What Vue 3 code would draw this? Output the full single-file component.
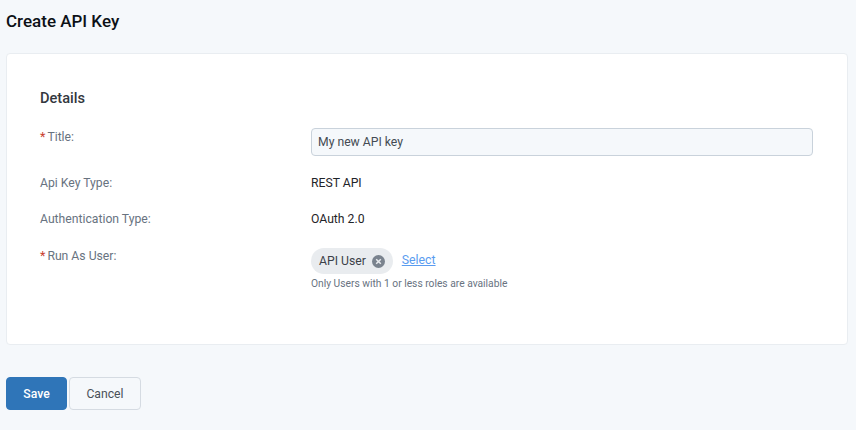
<script setup>
const rows = [
  { label: 'Api Key Type:', value: 'REST API' },
  { label: 'Authentication Type:', value: 'OAuth 2.0' },
]
</script>

<template>
  <main class="page">
    <h1 class="title">Create API Key</h1>
    <section class="card">
      <h2 class="section">Details</h2>
      <div class="row row-title">
        <div class="label label-title"><span class="req">*</span>Title:</div>
        <input class="input" value="My new API key" />
      </div>
      <div v-for="r in rows" :key="r.label" class="row row-static">
        <div class="label">{{ r.label }}</div>
        <div class="value">{{ r.value }}</div>
      </div>
      <div class="row row-user">
        <div class="label"><span class="req">*</span>Run As User:</div>
        <div>
          <div class="picker">
            <span class="chip">API User
              <svg class="x" width="13" height="13" viewBox="0 0 13 13">
                <circle cx="6.5" cy="6.5" r="6.5" fill="#7a838e" />
                <path d="M4.2 4.2l4.6 4.6M8.8 4.2l-4.6 4.6" stroke="#e9ecef" stroke-width="1.5" fill="none" />
              </svg>
            </span>
            <a class="link" href="#">Select</a>
          </div>
          <div class="hint">Only Users with 1 or less roles are available</div>
        </div>
      </div>
    </section>
    <div class="actions">
      <button class="btn primary">Save</button>
      <button class="btn ghost">Cancel</button>
    </div>
  </main>
</template>

<style>
html, body { margin: 0; background: #f5f8fb; }
</style>

<style scoped>
.page {
  width: 856px;
  height: 430px;
  box-sizing: border-box;
  background: #f5f8fb;
  padding: 11px 8px 0 6px;
  font-family: Roboto, "Liberation Sans", sans-serif;
  overflow: hidden;
}
.title {
  margin: 0;
  font-size: 17px;
  line-height: 21px;
  font-weight: 500;
  color: #0c1117;
}
.card {
  margin-top: 21px;
  height: 292px;
  box-sizing: border-box;
  background: #fff;
  border: 1px solid #e9edf1;
  border-radius: 4px;
  padding: 35px 34px 0 33px;
}
.section {
  margin: 0;
  font-size: 14.6px;
  line-height: 18px;
  font-weight: 500;
  color: #33383e;
}
.row {
  display: grid;
  grid-template-columns: 271px 1fr;
}
.row-title { margin-top: 21px; height: 46px; }
.label-title { padding-top: 1px; }
.row-static { height: 36px; align-items: start; padding-top: 1px; box-sizing: border-box; }
.row-user { margin-top: 2px; }
.label {
  font-size: 12.2px;
  line-height: 16px;
  color: #68737f;
}
.req { color: #c9402f; margin-right: 2px; font-size: 12.5px; }
.input {
  box-sizing: border-box;
  width: 502px;
  height: 28px;
  margin: 0;
  padding: 0 6px;
  background: #f5f8fb;
  border: 1px solid #c9d2db;
  border-radius: 4px;
  font: 12.2px Roboto, "Liberation Sans", sans-serif;
  color: #444b53;
}
.value {
  font-size: 12.2px;
  line-height: 16px;
  color: #1f2429;
}
.picker { display: flex; align-items: center; gap: 9px; }
.chip {
  display: inline-flex;
  align-items: center;
  gap: 6px;
  height: 26px;
  box-sizing: border-box;
  padding: 0 8px;
  background: #e9ecef;
  border-radius: 13px;
  font-size: 12.2px;
  color: #3b4148;
}
.x { display: block; }
.link {
  font-size: 12.3px;
  color: #5a9cf0;
  text-decoration: underline;
  margin-bottom: 2px;
}
.hint {
  margin-top: 3px;
  font-size: 10.25px;
  line-height: 14px;
  color: #68737f;
}
.actions {
  display: flex;
  gap: 2px;
  margin-top: 32px;
}
.btn {
  box-sizing: border-box;
  height: 33px;
  border-radius: 4px;
  font: 12.2px Roboto, "Liberation Sans", sans-serif;
  padding: 0;
}
.primary {
  width: 61px;
  background: #2f75b8;
  border: 1px solid #2f75b8;
  color: #fff;
  font-weight: 500;
}
.ghost {
  width: 72px;
  background: #f5f8fb;
  border: 1px solid #d5dbe2;
  color: #4a5058;
}
</style>
